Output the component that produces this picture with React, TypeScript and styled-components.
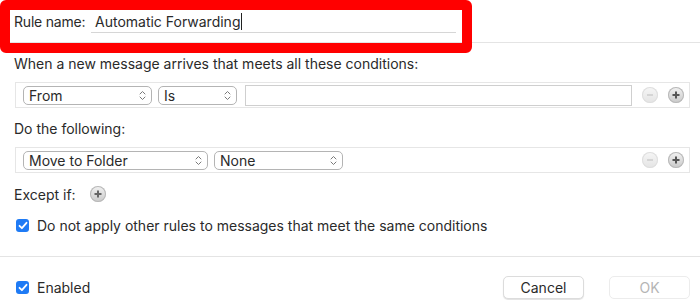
import styled, { createGlobalStyle } from "styled-components";

const GlobalStyle = createGlobalStyle`
  html, body {
    margin: 0;
    padding: 0;
    background: #ffffff;
  }
  body {
    font-family: Inter, "Liberation Sans", Arial, sans-serif;
    font-size: 14px;
    color: #2a2a2a;
  }
`;

const Dialog = styled.div`
  position: relative;
  width: 700px;
  height: 300px;
  overflow: hidden;
  background: #fff;
`;

const Header = styled.div`
  display: flex;
  align-items: flex-start;
  height: 43px;
  padding-left: 14px;
  border-bottom: 1px solid #e4e4e4;
  box-sizing: border-box;
`;

const HeaderLabel = styled.span`
  margin-top: 13px;
  width: 77px;
  letter-spacing: -0.2px;
`;

const NameField = styled.div`
  margin-top: 10px;
  width: 365px;
  height: 23px;
  border-bottom: 1px solid #d6d6d6;
  display: flex;
  align-items: center;
  padding-left: 4px;
  box-sizing: border-box;
`;

const Caret = styled.span`
  display: inline-block;
  width: 1px;
  height: 17px;
  background: #222;
  margin-left: 1px;
`;

const Highlight = styled.div`
  position: absolute;
  left: 0;
  top: 0;
  width: 472px;
  height: 53px;
  border: 10px solid #ff0000;
  border-radius: 6px;
  box-sizing: border-box;
  pointer-events: none;
`;

const Body = styled.div`
  padding: 12px 10px 0 14px;
`;

const SectionTitle = styled.div<{ $top?: number }>`
  margin-top: ${(p) => p.$top ?? 0}px;
  height: 18px;
  line-height: 18px;
`;

const RuleRow = styled.div<{ $top: number }>`
  margin-top: ${(p) => p.$top}px;
  margin-left: 1px;
  height: 26px;
  border: 1px solid #e6e6e6;
  box-sizing: border-box;
  display: flex;
  align-items: center;
  padding-left: 7px;
  padding-right: 5px;
  gap: 6px;
`;

const Popup = styled.div<{ $w: number }>`
  width: ${(p) => p.$w}px;
  height: 19px;
  border: 1px solid #b4b4b4;
  border-radius: 5px;
  box-sizing: border-box;
  display: flex;
  align-items: center;
  justify-content: space-between;
  padding: 0 5px 0 5px;
  background: #fff;
  flex-shrink: 0;
`;

const ValueField = styled.div`
  flex: 1;
  height: 21px;
  border: 1px solid #cfcfcf;
  box-sizing: border-box;
  margin-left: 2px;
`;

const Spacer = styled.div`
  flex: 1;
`;

const RoundButton = styled.div<{ $disabled?: boolean }>`
  width: 16px;
  height: 16px;
  border-radius: 50%;
  flex-shrink: 0;
  display: flex;
  align-items: center;
  justify-content: center;
  background: ${(p) =>
    p.$disabled
      ? "linear-gradient(#f6f6f6, #e4e4e4)"
      : "linear-gradient(#f2f2f2, #c9c9c9)"};
  box-shadow: inset 0 0 0 1px ${(p) => (p.$disabled ? "#dedede" : "#b8b8b8")};
  margin-left: 4px;
`;

const ExceptRow = styled.div`
  margin-top: 12px;
  display: flex;
  align-items: center;
  height: 18px;
  gap: 10px;
`;

const CheckRow = styled.label`
  display: flex;
  align-items: center;
  gap: 8px;
  margin-left: 2px;
`;

const OptionRow = styled(CheckRow)`
  margin-top: 13px;
  height: 18px;
`;

const Box = styled.span`
  width: 13px;
  height: 13px;
  border-radius: 3px;
  background: #1f7bf5;
  display: flex;
  align-items: center;
  justify-content: center;
  flex-shrink: 0;
`;

const Divider = styled.div`
  margin-top: 22px;
  height: 1px;
  background: #e4e4e4;
`;

const Footer = styled.div`
  display: flex;
  align-items: center;
  height: 24px;
  padding: 18px 10px 0 14px;
`;

const PushButton = styled.button<{ $disabled?: boolean }>`
  width: 81px;
  height: 23px;
  border-radius: 5px;
  border: 1px solid ${(p) => (p.$disabled ? "#ececec" : "#dcdcdc")};
  box-shadow: ${(p) => (p.$disabled ? "none" : "0 1px 1px rgba(0,0,0,0.12)")};
  background: #fff;
  font: inherit;
  font-size: 14px;
  color: ${(p) => (p.$disabled ? "#b5b5b5" : "#2a2a2a")};
  padding: 0;
  margin-left: 25px;
  &:first-of-type {
    margin-left: 0;
  }
`;

function Chevrons() {
  return (
    <svg width="7" height="11" viewBox="0 0 7 11">
      <path
        d="M1 4 L3.5 1.5 L6 4 M1 7 L3.5 9.5 L6 7"
        fill="none"
        stroke="#7a7a7a"
        strokeWidth="1"
        strokeLinecap="round"
        strokeLinejoin="round"
      />
    </svg>
  );
}

function Plus({ color = "#555" }: { color?: string }) {
  return (
    <svg width="10" height="10" viewBox="0 0 10 10">
      <path d="M5 1.5 V8.5 M1.5 5 H8.5" stroke={color} strokeWidth="2" />
    </svg>
  );
}

function Minus() {
  return (
    <svg width="10" height="10" viewBox="0 0 10 10">
      <path d="M2 5 H8" stroke="#cfcfcf" strokeWidth="1.6" />
    </svg>
  );
}

function Check() {
  return (
    <svg width="10" height="9" viewBox="0 0 10 9">
      <path
        d="M1.5 4.8 L3.9 7.2 L8.5 1.8"
        fill="none"
        stroke="#fff"
        strokeWidth="1.8"
        strokeLinecap="round"
        strokeLinejoin="round"
      />
    </svg>
  );
}

function PopupButton({ label, width }: { label: string; width: number }) {
  return (
    <Popup $w={width}>
      <span>{label}</span>
      <Chevrons />
    </Popup>
  );
}

export default function App() {
  return (
    <>
      <GlobalStyle />
      <Dialog>
        <Header>
          <HeaderLabel>Rule name:</HeaderLabel>
          <NameField>
            Automatic Forwarding
            <Caret />
          </NameField>
        </Header>

        <Body>
          <SectionTitle>
            When a new message arrives that meets all these conditions:
          </SectionTitle>
          <RuleRow $top={9}>
            <PopupButton label="From" width={129} />
            <PopupButton label="Is" width={79} />
            <ValueField />
            <RoundButton $disabled>
              <Minus />
            </RoundButton>
            <RoundButton>
              <Plus />
            </RoundButton>
          </RuleRow>

          <SectionTitle $top={12}>Do the following:</SectionTitle>
          <RuleRow $top={9}>
            <PopupButton label="Move to Folder" width={185} />
            <PopupButton label="None" width={129} />
            <Spacer />
            <RoundButton $disabled>
              <Minus />
            </RoundButton>
            <RoundButton>
              <Plus />
            </RoundButton>
          </RuleRow>

          <ExceptRow>
            <span>Except if:</span>
            <RoundButton>
              <Plus color="#666" />
            </RoundButton>
          </ExceptRow>

          <OptionRow>
            <Box>
              <Check />
            </Box>
            <span>Do not apply other rules to messages that meet the same conditions</span>
          </OptionRow>
        </Body>

        <Divider />

        <Footer>
          <CheckRow>
            <Box>
              <Check />
            </Box>
            <span>Enabled</span>
          </CheckRow>
          <Spacer />
          <PushButton>Cancel</PushButton>
          <PushButton $disabled>OK</PushButton>
        </Footer>

        <Highlight />
      </Dialog>
    </>
  );
}
